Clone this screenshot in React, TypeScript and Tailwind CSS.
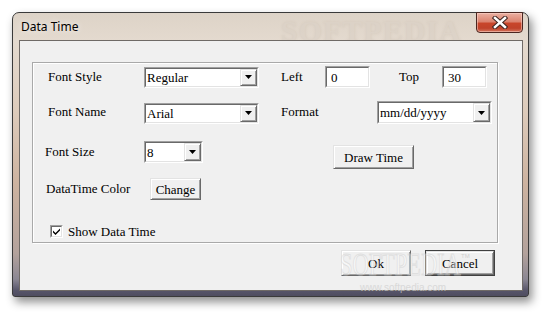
import React from "react";

const serif = "font-['Liberation_Serif','Times_New_Roman',serif] text-[13px] text-black";

function Sunken({ className = "", children }: { className?: string; children: React.ReactNode }) {
  return (
    <div className={`flex border border-t-[#a0a0a0] border-l-[#a0a0a0] border-b-white border-r-white ${className}`}>
      <div className="flex flex-1 border border-t-[#696969] border-l-[#696969] border-b-[#e3e3e3] border-r-[#e3e3e3] bg-white">
        {children}
      </div>
    </div>
  );
}

function Arrow() {
  return (
    <div className="flex w-[17px] items-center justify-center border border-t-[#e3e3e3] border-l-[#e3e3e3] border-b-[#696969] border-r-[#696969] bg-[#f0f0f0] shadow-[inset_1px_1px_0_#ffffff,inset_-1px_-1px_0_#a0a0a0]">
      <svg width="7" height="4" viewBox="0 0 7 4">
        <path d="M0 0H7L3.5 4Z" fill="#000" />
      </svg>
    </div>
  );
}

function Combo({ className, text }: { className: string; text: string }) {
  return (
    <Sunken className={className}>
      <div className="flex flex-1 items-center pl-[1px] leading-none">{text}</div>
      <Arrow />
    </Sunken>
  );
}

function Field({ className, text }: { className: string; text: string }) {
  return (
    <Sunken className={className}>
      <div className="flex flex-1 items-center pl-[4px] leading-none">{text}</div>
    </Sunken>
  );
}

function Btn({ className, text, def }: { className: string; text: string; def?: boolean }) {
  const inner = (
    <div className="flex flex-1 items-center justify-center border border-t-[#e3e3e3] border-l-[#e3e3e3] border-b-[#696969] border-r-[#696969] bg-[#f0f0f0] shadow-[inset_1px_1px_0_#ffffff,inset_-1px_-1px_0_#a0a0a0] leading-none">
      {text}
    </div>
  );
  if (def) {
    return <div className={`flex border border-[#404040] ${className}`}>{inner}</div>;
  }
  return <div className={`flex ${className}`}>{inner}</div>;
}

export default function App() {
  return (
    <div className="relative h-[318px] w-[549px] overflow-hidden bg-white">
      <div className="ml-[12px] mt-[12px] flex h-[285px] w-[517px] flex-col rounded-t-[7px] rounded-b-[3px] border border-[#3a3a3a] bg-[linear-gradient(180deg,#ddd3c7_0%,#e4dacf_10%,#ddcbbb_35%,#cdb3a0_60%,#b3a29c_85%,#8b8793_94%,#57556a_98%,#4f4d60_100%)] pl-[6px] pr-[5px] pb-[5px] shadow-[3px_5px_10px_rgba(0,0,0,0.45)]">
        <div className="relative flex h-[27px] items-start">
          <div className="ml-[2px] mt-[6px] font-['Noto_Sans','Open_Sans',sans-serif] text-[12px] leading-[16px] text-black [text-shadow:0_0_6px_rgba(255,255,255,0.9)]">
            Data Time
          </div>
          <div className="pointer-events-none absolute left-[262px] top-[3px] font-['Liberation_Serif',serif] text-[30px] font-bold leading-none tracking-[1px] text-[#dbd1c6] opacity-70 [text-shadow:0_0_3px_#d0c4b6]">
            SOFTPEDIA
          </div>
          <div className="relative ml-auto -mt-[1px] flex h-[21px] w-[47px] items-center justify-center rounded-b-[4px] border border-[#4a2620] bg-[linear-gradient(180deg,#eab0a2_0%,#dc8470_45%,#c8452a_55%,#c0422a_80%,#d4765e_100%)] shadow-[inset_0_0_0_1px_rgba(255,220,210,0.5)]">
            <svg width="16" height="13" viewBox="0 0 16 13">
              <path d="M3 2L13 11M13 2L3 11" stroke="#3b2420" strokeWidth="4.5" strokeLinecap="square" />
              <path d="M3 2L13 11M13 2L3 11" stroke="#ffffff" strokeWidth="2.5" strokeLinecap="square" />
            </svg>
          </div>
        </div>
        <div className={`relative flex h-[251px] w-[504px] flex-col border border-[#6f6a66] bg-[#f0f0f0] pl-[12px] pt-[21px] ${serif}`}>
          <div className="flex h-[181px] w-[466px] flex-col border border-[#a9a9a9] shadow-[inset_1px_1px_0_#ffffff,1px_1px_0_#ffffff]">
            <div className="mt-[3px] flex h-[22px] items-center">
              <div className="w-[111px] pl-[15px]">Font Style</div>
              <Combo className="h-[21px] w-[115px]" text="Regular" />
              <div className="ml-[22px] w-[44px]">Left</div>
              <Field className="h-[22px] w-[45px]" text="0" />
              <div className="ml-[29px] w-[43px]">Top</div>
              <Field className="h-[22px] w-[45px]" text="30" />
            </div>
            <div className="mt-[13px] flex h-[23px] items-center">
              <div className="w-[111px] pl-[15px] -mt-[2px]">Font Name</div>
              <Combo className="mt-[1px] h-[21px] w-[115px]" text="Arial" />
              <div className="ml-[22px] w-[96px] -mt-[2px]">Format</div>
              <Combo className="h-[23px] w-[115px]" text="mm/dd/yyyy" />
            </div>
            <div className="mt-[17px] flex h-[28px] items-start">
              <div className="flex h-[22px] w-[111px] items-center pl-[12px]">Font Size</div>
              <Combo className="h-[22px] w-[59px]" text="8" />
              <Btn className="ml-[130px] mt-[4px] h-[24px] w-[81px]" text="Draw Time" />
            </div>
            <div className="mt-[9px] flex h-[22px] items-center">
              <div className="w-[117px] pl-[13px]">DataTime Color</div>
              <Btn className="h-[22px] w-[51px]" text="Change" />
            </div>
            <div className="mt-[25px] flex h-[13px] items-center">
              <div className="ml-[17px] flex h-[13px] w-[13px] border border-t-[#a0a0a0] border-l-[#a0a0a0] border-b-white border-r-white">
                <div className="flex flex-1 items-center justify-center border border-t-[#696969] border-l-[#696969] border-b-[#e3e3e3] border-r-[#e3e3e3] bg-white">
                  <svg width="7" height="7" viewBox="0 0 7 7">
                    <path d="M0 2.5L0 4.5L2.5 7L7 2.5L7 0.5L2.5 5Z" fill="#000" />
                  </svg>
                </div>
              </div>
              <div className="ml-[5px] leading-none">Show Data Time</div>
            </div>
          </div>
          <div className="mt-[7px] flex w-[466px] justify-end gap-[14px] pr-[3px]">
            <Btn className="h-[26px] w-[70px]" text="Ok" />
            <Btn className="h-[26px] w-[70px]" text="Cancel" def />
          </div>
          <div className="pointer-events-none absolute left-[320px] top-[207px] origin-left scale-x-[0.7] font-['Liberation_Serif',serif] text-[32px] leading-none text-white opacity-50 [-webkit-text-stroke:1px_#d0d0d0]">
            SOFTPEDIA
          </div>
          <div className="pointer-events-none absolute left-[441px] top-[212px] font-['Liberation_Sans',sans-serif] text-[6px] leading-none text-[#d0d0d0]">
            TM
          </div>
          <div className="pointer-events-none absolute left-[340px] top-[242px] font-['Liberation_Sans',sans-serif] text-[10px] leading-none text-[#cfcfcf] opacity-70">
            www.softpedia.com
          </div>
        </div>
      </div>
    </div>
  );
}
